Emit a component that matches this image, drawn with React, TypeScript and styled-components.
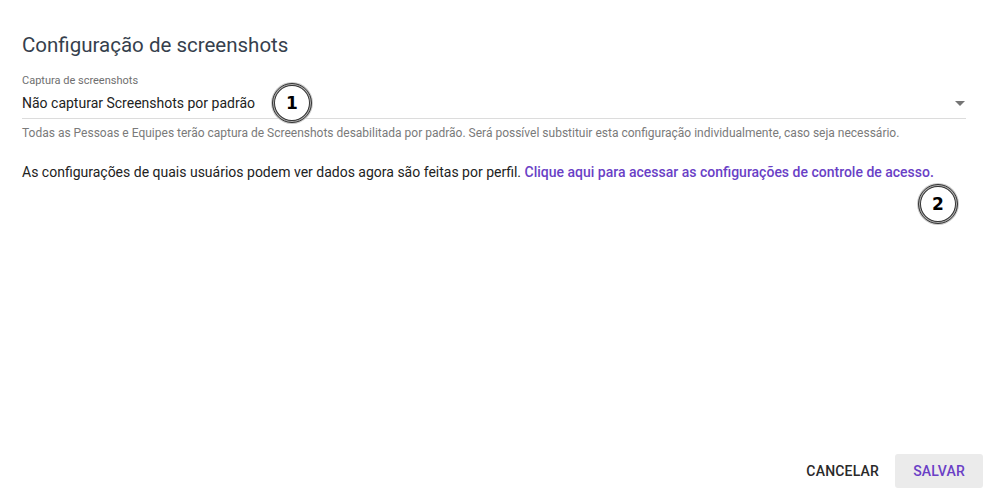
import styled, { createGlobalStyle } from 'styled-components';

const GlobalStyle = createGlobalStyle`
  html, body {
    margin: 0;
    padding: 0;
    background: #ffffff;
    font-family: Roboto, "Liberation Sans", Arial, sans-serif;
  }
`;

const Page = styled.div`
  position: relative;
  width: 991px;
  height: 496px;
  box-sizing: border-box;
  padding: 32px 25px 0 22px;
  display: flex;
  flex-direction: column;
`;

const Title = styled.h2`
  margin: 0;
  font-size: 20.5px;
  font-weight: 400;
  color: #363f4d;
  line-height: 26px;
`;

const Field = styled.div`
  margin-top: 16px;
  display: flex;
  flex-direction: column;
`;

const Label = styled.label`
  font-size: 11px;
  color: #6f6f6f;
  line-height: 13px;
`;

const SelectRow = styled.div`
  display: flex;
  align-items: center;
  justify-content: space-between;
  height: 30px;
  border-bottom: 1px solid #dcdcdc;
  padding-top: 1px;
  font-size: 14px;
  color: #222222;
`;

const Arrow = styled.span`
  width: 0;
  height: 0;
  border-left: 5px solid transparent;
  border-right: 5px solid transparent;
  border-top: 5px solid #757575;
  margin-right: 1px;
`;

const Helper = styled.p`
  margin: 7px 0 0;
  font-size: 12px;
  color: #7a7a7a;
  line-height: 14px;
`;

const Notice = styled.p`
  margin: 23px 0 0;
  font-size: 14px;
  color: #222222;
  line-height: 18px;
`;

const Link = styled.a`
  color: #6a3fc6;
  font-weight: 500;
  text-decoration: none;
  cursor: pointer;
`;

const Actions = styled.div`
  margin-top: auto;
  margin-right: -17px;
  margin-bottom: 8px;
  display: flex;
  justify-content: flex-end;
  align-items: center;
`;

const ActionButton = styled.button<{ $primary?: boolean }>`
  border: none;
  border-radius: 3px;
  height: 34px;
  padding: 0 ${p => (p.$primary ? 18 : 16)}px;
  font-family: inherit;
  font-size: 14px;
  font-weight: 500;
  letter-spacing: 0.2px;
  background: ${p => (p.$primary ? '#ebebeb' : 'transparent')};
  color: ${p => (p.$primary ? '#6a3fc6' : '#2a2a2a')};
  cursor: pointer;
`;

const Badge = styled.div<{ $x: number; $y: number }>`
  position: absolute;
  left: ${p => p.$x}px;
  top: ${p => p.$y}px;
  width: 40px;
  height: 40px;
  border-radius: 50%;
  border: 1px solid #333;
  box-shadow: inset 0 0 0 1px #b8b8b8, inset 0 0 0 2px #333, 0 0 0 1px #ccc;
  background: #fff;
  display: flex;
  align-items: center;
  justify-content: center;
  font-family: "DejaVu Sans", sans-serif;
  font-weight: 700;
  font-size: 17px;
  color: #000;
  box-sizing: border-box;
`;

export default function App() {
  return (
    <Page>
      <GlobalStyle />
      <Title>Configuração de screenshots</Title>
      <Field>
        <Label>Captura de screenshots</Label>
        <SelectRow>
          <span>Não capturar Screenshots por padrão</span>
          <Arrow />
        </SelectRow>
        <Helper>
          Todas as Pessoas e Equipes terão captura de Screenshots desabilitada por padrão. Será possível substituir esta
          configuração individualmente, caso seja necessário.
        </Helper>
      </Field>
      <Notice>
        As configurações de quais usuários podem ver dados agora são feitas por perfil.{' '}
        <Link>Clique aqui para acessar as configurações de controle de acesso.</Link>
      </Notice>
      <Actions>
        <ActionButton>CANCELAR</ActionButton>
        <ActionButton $primary>SALVAR</ActionButton>
      </Actions>
      <Badge $x={272} $y={83}>1</Badge>
      <Badge $x={918} $y={184}>2</Badge>
    </Page>
  );
}
